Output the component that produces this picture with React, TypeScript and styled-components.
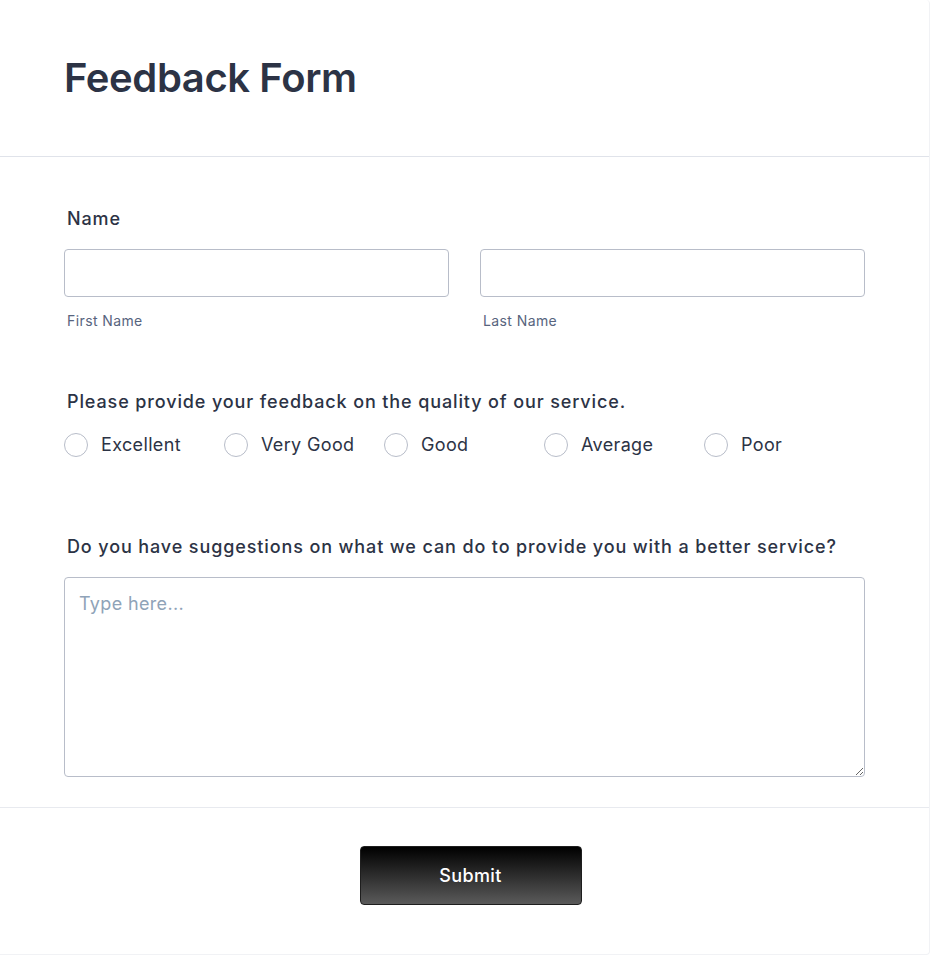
import React from 'react';
import styled, { createGlobalStyle } from 'styled-components';

const GlobalStyle = createGlobalStyle`
   html, body {
      margin: 0;
      padding: 0;
      background: #ffffff;
   }
   body {
      font-family: Inter, "Noto Sans", Arial, sans-serif;
      color: #2c3345;
   }
   * {
      box-sizing: border-box;
   }
`;

const RATINGS = ['Excellent', 'Very Good', 'Good', 'Average', 'Poor'];

function App() {
   return (
      <>
         <GlobalStyle />
         <Card>
            <Header>
               <Title>Feedback Form</Title>
            </Header>

            <Body>
               <Field>
                  <Label>Name</Label>
                  <NameRow>
                     <NameCol>
                        <TextInput type="text" aria-label="First Name" />
                        <SubLabel>First Name</SubLabel>
                     </NameCol>
                     <NameCol>
                        <TextInput type="text" aria-label="Last Name" />
                        <SubLabel>Last Name</SubLabel>
                     </NameCol>
                  </NameRow>
               </Field>

               <Field $top={57}>
                  <Label>Please provide your feedback on the quality of our service.</Label>
                  <RadioRow>
                     {RATINGS.map((rating) => (
                        <RadioOption key={rating}>
                           <RadioInput type="radio" name="quality" value={rating} />
                           <RadioText>{rating}</RadioText>
                        </RadioOption>
                     ))}
                  </RadioRow>
               </Field>

               <Field $top={74}>
                  <Label>Do you have suggestions on what we can do to provide you with a better service?</Label>
                  <TextArea placeholder="Type here..." />
               </Field>
            </Body>

            <Footer>
               <SubmitButton type="button">Submit</SubmitButton>
            </Footer>
         </Card>
      </>
   );
}

export default App;

const Card = styled.div`
   width: 930px;
   min-height: 955px;
   background: #ffffff;
   border-right: 1px solid #f1f2f5;
   border-bottom: 1px solid #f1f2f5;
   border-radius: 0 4px 4px 0;
   display: flex;
   flex-direction: column;
`;

const Header = styled.header`
   padding: 52px 64px;
   border-bottom: 1px solid #e0e3ea;
`;

const Title = styled.h1`
   margin: 0;
   font-size: 40px;
   line-height: 52px;
   font-weight: 600;
   letter-spacing: -0.4px;
   color: #2c3345;
`;

const Body = styled.div`
   padding: 48px 64px 30px;
   border-bottom: 1px solid #e8eaef;
`;

const Field = styled.div<{ $top?: number }>`
   display: flex;
   flex-direction: column;
   margin-top: ${(p) => p.$top ?? 0}px;
`;

const Label = styled.label`
   font-size: 18px;
   line-height: 28px;
   font-weight: 500;
   letter-spacing: 0.88px;
   color: #2c3345;
   padding-left: 3px;
   margin-bottom: 16px;
`;

const NameRow = styled.div`
   display: grid;
   grid-template-columns: 1fr 1fr;
   column-gap: 31px;
`;

const NameCol = styled.div`
   display: flex;
   flex-direction: column;
`;

const TextInput = styled.input`
   height: 48px;
   width: 100%;
   border: 1px solid #b8bdc9;
   border-radius: 4px;
   padding: 0 14px;
   font-family: inherit;
   font-size: 16px;
   color: #2c3345;
   outline: none;
`;

const SubLabel = styled.span`
   margin-top: 14px;
   padding-left: 3px;
   font-size: 14px;
   line-height: 20px;
   letter-spacing: 0.4px;
   color: #57647e;
`;

const RadioRow = styled.div`
   display: flex;
   margin-top: -1px;
`;

const RadioOption = styled.label`
   width: 160px;
   height: 28px;
   display: flex;
   align-items: center;
   gap: 13px;
   cursor: pointer;
`;

const RadioInput = styled.input`
   appearance: none;
   margin: 0;
   width: 24px;
   height: 24px;
   border: 1px solid #b8bdc9;
   border-radius: 50%;
   background: #ffffff;
   flex-shrink: 0;
`;

const RadioText = styled.span`
   font-size: 18px;
   line-height: 28px;
   letter-spacing: 0.35px;
   color: #2c3345;
`;

const TextArea = styled.textarea`
   height: 200px;
   width: 100%;
   border: 1px solid #b8bdc9;
   border-radius: 4px;
   padding: 12px 14px;
   font-family: inherit;
   font-size: 18px;
   line-height: 28px;
   letter-spacing: 0.35px;
   color: #2c3345;
   resize: vertical;
   outline: none;

   &::placeholder {
      color: #8fa3b8;
   }
`;

const Footer = styled.footer`
   display: flex;
   justify-content: center;
   padding: 38px 0 0 12px;
`;

const SubmitButton = styled.button`
   width: 222px;
   height: 59px;
   border: 1px solid #1e1e1e;
   border-radius: 4px;
   background: linear-gradient(180deg, #000000 0%, #5a5a5a 100%);
   color: #ffffff;
   font-family: inherit;
   font-size: 18px;
   font-weight: 500;
   letter-spacing: 0.35px;
   cursor: pointer;
`;
